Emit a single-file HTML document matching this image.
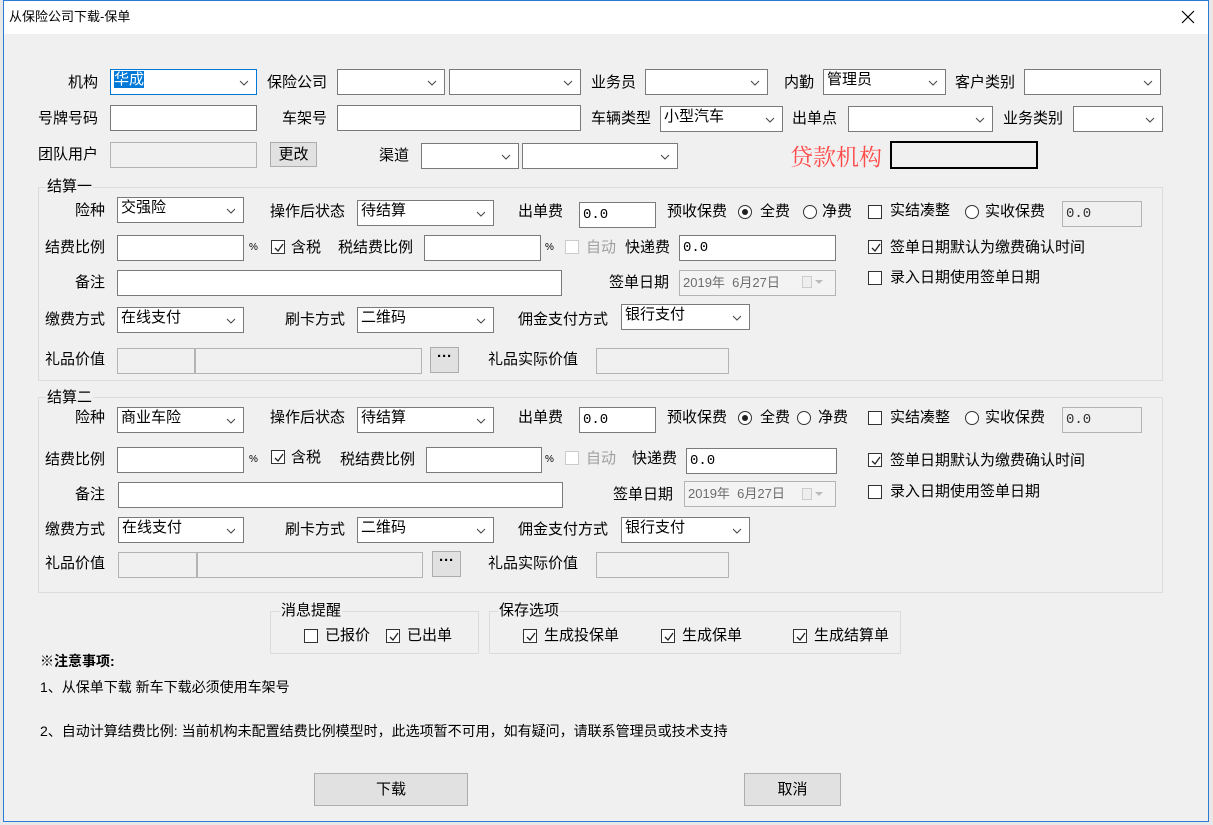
<!DOCTYPE html>
<html><head><meta charset="utf-8">
<style>
*{box-sizing:border-box;margin:0;padding:0}
body{width:1213px;height:825px;overflow:hidden;background:#e8e8e8;font-family:"Liberation Sans","Noto Sans CJK SC","WenQuanYi Zen Hei",sans-serif;font-size:15px;color:#000;position:relative}
#win{position:absolute;left:3px;top:0;width:1206px;height:822px;background:#f0f0f0;border:1px solid #2b7bd6}
#title{position:absolute;left:0;top:0;width:100%;height:33px;background:#fff}
.a{position:absolute}
.l{position:absolute;white-space:nowrap;line-height:16px}
.in{position:absolute;background:#fff;border:1px solid #7a7a7a;height:26px;padding-left:3px;line-height:24px;white-space:nowrap;font-family:"Liberation Mono",monospace;font-size:14px}
.dis{background:#f0f0f0;border-color:#b4b4b4;color:#6d6d6d}
.cb{position:absolute;background:#fff;border:1px solid #7a7a7a;height:26px;padding-left:3px;line-height:20px;white-space:nowrap}
.cb svg{position:absolute;right:7px;top:10px}
.chk{position:absolute;width:14px;height:14px;border:1px solid #333;background:#fff}
.chk svg{position:absolute;left:1px;top:1px}
.rad{position:absolute;width:14px;height:14px;border:1px solid #333;border-radius:50%;background:#fff}
.rad.on::after{content:"";position:absolute;left:3px;top:3px;width:6px;height:6px;border-radius:50%;background:#222}
.grp{position:absolute;border:1px solid #dcdcdc}
.gl{position:absolute;background:#f0f0f0;padding:0 1px;line-height:16px}
.btn{position:absolute;background:#e1e1e1;border:1px solid #adadad;text-align:center}
.dt{font-family:"Liberation Sans","Noto Sans CJK SC",sans-serif;font-size:13px}
</style></head><body>
<div id="win">
<div id="title"></div>
</div>
<div class="l" style="left:9px;top:9px;font-size:13px">从保险公司下载-保单</div>
<svg class="a" style="left:1181px;top:10px" width="14" height="14"><path d="M1 1L13 13M13 1L1 13" stroke="#000" stroke-width="1.2"/></svg>

<div class="l" style="left:68px;top:75px">机构</div>
<div class="cb" style="left:110px;top:69px;width:147px;border-color:#0078d7"><span style="background:#0078d7;color:#fff">华成</span><svg width="10" height="6"><path d="M1 1L5 5L9 1" fill="none" stroke="#444"/></svg></div>
<div class="l" style="left:267px;top:75px">保险公司</div>
<div class="cb" style="left:337px;top:69px;width:108px"><svg width="10" height="6"><path d="M1 1L5 5L9 1" fill="none" stroke="#444"/></svg></div>
<div class="cb" style="left:449px;top:69px;width:132px"><svg width="10" height="6"><path d="M1 1L5 5L9 1" fill="none" stroke="#444"/></svg></div>
<div class="l" style="left:591px;top:75px">业务员</div>
<div class="cb" style="left:645px;top:69px;width:123px"><svg width="10" height="6"><path d="M1 1L5 5L9 1" fill="none" stroke="#444"/></svg></div>
<div class="l" style="left:784px;top:75px">内勤</div>
<div class="cb" style="left:823px;top:69px;width:123px">管理员<svg width="10" height="6"><path d="M1 1L5 5L9 1" fill="none" stroke="#444"/></svg></div>
<div class="l" style="left:955px;top:75px">客户类别</div>
<div class="cb" style="left:1024px;top:69px;width:137px"><svg width="10" height="6"><path d="M1 1L5 5L9 1" fill="none" stroke="#444"/></svg></div>

<div class="l" style="left:38px;top:111px">号牌号码</div>
<div class="in" style="left:110px;top:105px;width:147px"></div>
<div class="l" style="left:282px;top:111px">车架号</div>
<div class="in" style="left:337px;top:105px;width:244px"></div>
<div class="l" style="left:591px;top:111px">车辆类型</div>
<div class="cb" style="left:660px;top:106px;width:123px">小型汽车<svg width="10" height="6"><path d="M1 1L5 5L9 1" fill="none" stroke="#444"/></svg></div>
<div class="l" style="left:792px;top:111px">出单点</div>
<div class="cb" style="left:848px;top:106px;width:145px"><svg width="10" height="6"><path d="M1 1L5 5L9 1" fill="none" stroke="#444"/></svg></div>
<div class="l" style="left:1003px;top:111px">业务类别</div>
<div class="cb" style="left:1073px;top:106px;width:90px"><svg width="10" height="6"><path d="M1 1L5 5L9 1" fill="none" stroke="#444"/></svg></div>

<div class="l" style="left:38px;top:147px">团队用户</div>
<div class="in dis" style="left:110px;top:142px;width:147px"></div>
<div class="btn" style="left:270px;top:142px;width:47px;height:25px;line-height:23px">更改</div>
<div class="l" style="left:379px;top:148px">渠道</div>
<div class="cb" style="left:421px;top:143px;width:98px"><svg width="10" height="6"><path d="M1 1L5 5L9 1" fill="none" stroke="#444"/></svg></div>
<div class="cb" style="left:522px;top:143px;width:156px"><svg width="10" height="6"><path d="M1 1L5 5L9 1" fill="none" stroke="#444"/></svg></div>
<div class="l" style="left:790px;top:145px;font-size:23px;line-height:26px;color:#ff4a4a;font-family:'Liberation Serif','Noto Serif CJK SC',serif">贷款机构</div>
<div class="a" style="left:890px;top:141px;width:148px;height:28px;border:2px solid #000"></div>

<div class="grp" style="left:38px;top:187px;width:1125px;height:194px"></div>
<div class="gl" style="left:46px;top:179px">结算一</div>

<div class="l" style="left:75px;top:203px">险种</div>
<div class="cb" style="left:117px;top:197px;width:127px">交强险<svg width="10" height="6"><path d="M1 1L5 5L9 1" fill="none" stroke="#444"/></svg></div>
<div class="l" style="left:270px;top:204px">操作后状态</div>
<div class="cb" style="left:357px;top:200px;width:137px">待结算<svg width="10" height="6"><path d="M1 1L5 5L9 1" fill="none" stroke="#444"/></svg></div>
<div class="l" style="left:518px;top:204px">出单费</div>
<div class="in" style="left:579px;top:202px;width:77px">0.0</div>
<div class="l" style="left:667px;top:204px">预收保费</div>
<div class="rad on" style="left:738px;top:205px"></div><div class="l" style="left:760px;top:204px">全费</div>
<div class="rad" style="left:803px;top:205px"></div><div class="l" style="left:822px;top:204px">净费</div>
<div class="chk" style="left:868px;top:205px"></div><div class="l" style="left:890px;top:203px">实结凑整</div>
<div class="rad" style="left:965px;top:205px"></div><div class="l" style="left:985px;top:204px">实收保费</div>
<div class="in dis" style="left:1062px;top:201px;width:80px;color:#333">0.0</div>

<div class="l" style="left:45px;top:240px">结费比例</div>
<div class="in" style="left:117px;top:235px;width:127px"></div>
<div class="l" style="left:249px;top:240px;font-size:10px">%</div>
<div class="chk" style="left:271px;top:240px"><svg width="12" height="12"><path d="M2 6L5 9L10 2" fill="none" stroke="#222" stroke-width="1.3"/></svg></div>
<div class="l" style="left:291px;top:240px">含税</div>
<div class="l" style="left:338px;top:240px">税结费比例</div>
<div class="in" style="left:424px;top:235px;width:117px"></div>
<div class="l" style="left:545px;top:240px;font-size:10px">%</div>
<div class="chk" style="left:565px;top:240px;border-color:#ccc"></div><div class="l" style="left:586px;top:240px;color:#a0a0a0">自动</div>
<div class="l" style="left:625px;top:240px">快递费</div>
<div class="in" style="left:679px;top:235px;width:157px">0.0</div>
<div class="chk" style="left:868px;top:240px"><svg width="12" height="12"><path d="M2 6L5 9L10 2" fill="none" stroke="#222" stroke-width="1.3"/></svg></div>
<div class="l" style="left:890px;top:240px">签单日期默认为缴费确认时间</div>

<div class="l" style="left:75px;top:275px">备注</div>
<div class="in" style="left:117px;top:270px;width:445px"></div>
<div class="l" style="left:609px;top:275px">签单日期</div>
<div class="in dis dt" style="left:679px;top:270px;width:157px;background:#f3f3f3">2019年&nbsp;&nbsp;6月27日</div>
<div class="a" style="left:802px;top:276px;width:10px;height:12px;border:1px solid #ccc;background:#eee"></div>
<svg class="a" style="left:815px;top:280px" width="8" height="5"><path d="M0 0H8L4 4Z" fill="#bbb"/></svg>
<div class="chk" style="left:868px;top:271px"></div>
<div class="l" style="left:890px;top:270px">录入日期使用签单日期</div>

<div class="l" style="left:45px;top:312px">缴费方式</div>
<div class="cb" style="left:117px;top:307px;width:127px">在线支付<svg width="10" height="6"><path d="M1 1L5 5L9 1" fill="none" stroke="#444"/></svg></div>
<div class="l" style="left:285px;top:312px">刷卡方式</div>
<div class="cb" style="left:357px;top:307px;width:137px">二维码<svg width="10" height="6"><path d="M1 1L5 5L9 1" fill="none" stroke="#444"/></svg></div>
<div class="l" style="left:518px;top:312px">佣金支付方式</div>
<div class="cb" style="left:621px;top:304px;width:129px">银行支付<svg width="10" height="6"><path d="M1 1L5 5L9 1" fill="none" stroke="#444"/></svg></div>

<div class="l" style="left:45px;top:352px">礼品价值</div>
<div class="in dis" style="left:117px;top:348px;width:78px"></div>
<div class="in dis" style="left:195px;top:348px;width:227px"></div>
<div class="btn" style="left:430px;top:347px;width:29px;height:26px;line-height:18px;font-weight:bold">···</div>
<div class="l" style="left:488px;top:352px">礼品实际价值</div>
<div class="in dis" style="left:596px;top:348px;width:133px"></div>

<div class="grp" style="left:38px;top:397px;width:1125px;height:196px"></div>
<div class="gl" style="left:46px;top:390px">结算二</div>

<div class="l" style="left:75px;top:410px">险种</div>
<div class="cb" style="left:117px;top:407px;width:127px">商业车险<svg width="10" height="6"><path d="M1 1L5 5L9 1" fill="none" stroke="#444"/></svg></div>
<div class="l" style="left:270px;top:410px">操作后状态</div>
<div class="cb" style="left:357px;top:407px;width:137px">待结算<svg width="10" height="6"><path d="M1 1L5 5L9 1" fill="none" stroke="#444"/></svg></div>
<div class="l" style="left:518px;top:410px">出单费</div>
<div class="in" style="left:579px;top:407px;width:77px">0.0</div>
<div class="l" style="left:667px;top:410px">预收保费</div>
<div class="rad on" style="left:738px;top:411px"></div><div class="l" style="left:760px;top:410px">全费</div>
<div class="rad" style="left:797px;top:411px"></div><div class="l" style="left:818px;top:410px">净费</div>
<div class="chk" style="left:868px;top:411px"></div><div class="l" style="left:890px;top:410px">实结凑整</div>
<div class="rad" style="left:965px;top:411px"></div><div class="l" style="left:985px;top:410px">实收保费</div>
<div class="in dis" style="left:1062px;top:407px;width:80px;color:#333">0.0</div>

<div class="l" style="left:45px;top:452px">结费比例</div>
<div class="in" style="left:117px;top:447px;width:127px"></div>
<div class="l" style="left:249px;top:452px;font-size:10px">%</div>
<div class="chk" style="left:271px;top:450px"><svg width="12" height="12"><path d="M2 6L5 9L10 2" fill="none" stroke="#222" stroke-width="1.3"/></svg></div>
<div class="l" style="left:291px;top:450px">含税</div>
<div class="l" style="left:340px;top:452px">税结费比例</div>
<div class="in" style="left:426px;top:447px;width:116px"></div>
<div class="l" style="left:545px;top:452px;font-size:10px">%</div>
<div class="chk" style="left:565px;top:451px;border-color:#ccc"></div><div class="l" style="left:586px;top:451px;color:#a0a0a0">自动</div>
<div class="l" style="left:632px;top:451px">快递费</div>
<div class="in" style="left:686px;top:448px;width:151px">0.0</div>
<div class="chk" style="left:868px;top:453px"><svg width="12" height="12"><path d="M2 6L5 9L10 2" fill="none" stroke="#222" stroke-width="1.3"/></svg></div>
<div class="l" style="left:890px;top:453px">签单日期默认为缴费确认时间</div>

<div class="l" style="left:75px;top:487px">备注</div>
<div class="in" style="left:118px;top:482px;width:445px"></div>
<div class="l" style="left:613px;top:487px">签单日期</div>
<div class="in dis dt" style="left:684px;top:481px;width:152px;background:#f3f3f3">2019年&nbsp;&nbsp;6月27日</div>
<div class="a" style="left:802px;top:488px;width:10px;height:12px;border:1px solid #ccc;background:#eee"></div>
<svg class="a" style="left:815px;top:492px" width="8" height="5"><path d="M0 0H8L4 4Z" fill="#bbb"/></svg>
<div class="chk" style="left:868px;top:485px"></div>
<div class="l" style="left:890px;top:484px">录入日期使用签单日期</div>

<div class="l" style="left:45px;top:522px">缴费方式</div>
<div class="cb" style="left:118px;top:517px;width:126px">在线支付<svg width="10" height="6"><path d="M1 1L5 5L9 1" fill="none" stroke="#444"/></svg></div>
<div class="l" style="left:285px;top:522px">刷卡方式</div>
<div class="cb" style="left:357px;top:517px;width:137px">二维码<svg width="10" height="6"><path d="M1 1L5 5L9 1" fill="none" stroke="#444"/></svg></div>
<div class="l" style="left:518px;top:522px">佣金支付方式</div>
<div class="cb" style="left:621px;top:517px;width:129px">银行支付<svg width="10" height="6"><path d="M1 1L5 5L9 1" fill="none" stroke="#444"/></svg></div>

<div class="l" style="left:45px;top:556px">礼品价值</div>
<div class="in dis" style="left:118px;top:552px;width:79px"></div>
<div class="in dis" style="left:197px;top:552px;width:226px"></div>
<div class="btn" style="left:432px;top:551px;width:29px;height:26px;line-height:18px;font-weight:bold">···</div>
<div class="l" style="left:488px;top:556px">礼品实际价值</div>
<div class="in dis" style="left:596px;top:552px;width:133px"></div>

<div class="grp" style="left:270px;top:611px;width:209px;height:43px"></div>
<div class="gl" style="left:280px;top:603px">消息提醒</div>
<div class="chk" style="left:304px;top:629px"></div><div class="l" style="left:325px;top:628px">已报价</div>
<div class="chk" style="left:386px;top:629px"><svg width="12" height="12"><path d="M2 6L5 9L10 2" fill="none" stroke="#222" stroke-width="1.3"/></svg></div><div class="l" style="left:407px;top:628px">已出单</div>
<div class="grp" style="left:489px;top:611px;width:412px;height:43px"></div>
<div class="gl" style="left:498px;top:603px">保存选项</div>
<div class="chk" style="left:523px;top:629px"><svg width="12" height="12"><path d="M2 6L5 9L10 2" fill="none" stroke="#222" stroke-width="1.3"/></svg></div><div class="l" style="left:544px;top:628px">生成投保单</div>
<div class="chk" style="left:661px;top:629px"><svg width="12" height="12"><path d="M2 6L5 9L10 2" fill="none" stroke="#222" stroke-width="1.3"/></svg></div><div class="l" style="left:682px;top:628px">生成保单</div>
<div class="chk" style="left:793px;top:629px"><svg width="12" height="12"><path d="M2 6L5 9L10 2" fill="none" stroke="#222" stroke-width="1.3"/></svg></div><div class="l" style="left:814px;top:628px">生成结算单</div>

<div class="l" style="left:40px;top:653px;font-weight:bold;font-size:14px">※注意事项:</div>
<div class="l" style="left:40px;top:679px;font-size:14px">1、从保单下载 新车下载必须使用车架号</div>
<div class="l" style="left:40px;top:723px;font-size:14px">2、自动计算结费比例: 当前机构未配置结费比例模型时，此选项暂不可用，如有疑问，请联系管理员或技术支持</div>

<div class="btn" style="left:314px;top:773px;width:154px;height:33px;line-height:31px">下载</div>
<div class="btn" style="left:744px;top:773px;width:97px;height:33px;line-height:31px">取消</div>
</body></html>
